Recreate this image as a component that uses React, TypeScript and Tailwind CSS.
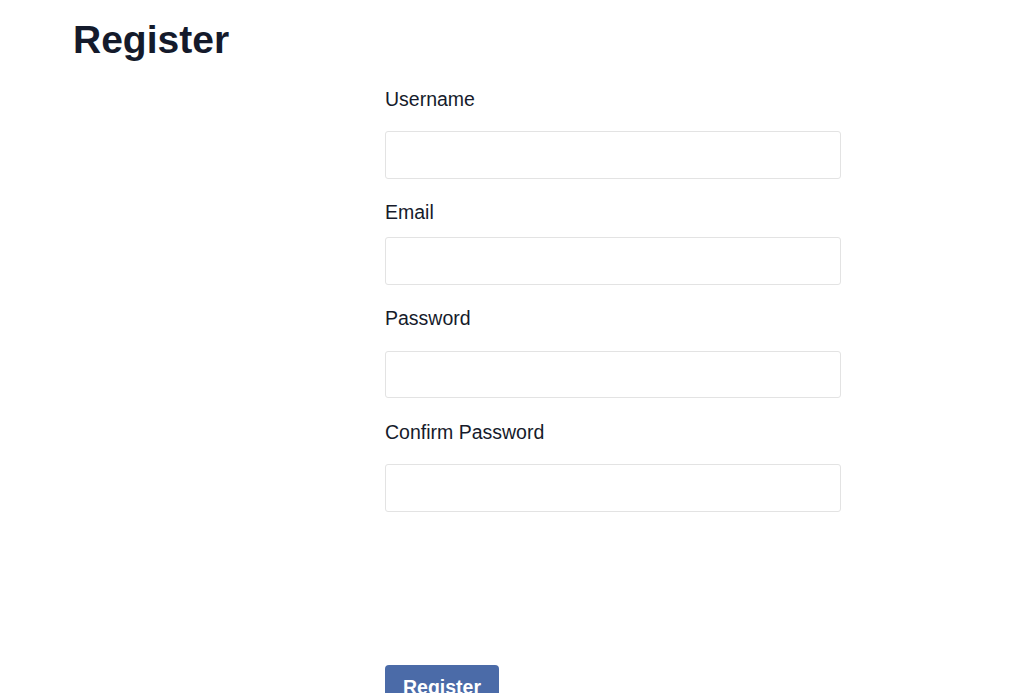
import React, { useState } from 'react';

interface FieldProps {
  label: string;
  type: string;
  value: string;
  onChange: (v: string) => void;
  wrapClass: string;
  labelClass: string;
  inputClass: string;
}

const Field: React.FC<FieldProps> = ({ label, type, value, onChange, wrapClass, labelClass, inputClass }) => (
  <div className={wrapClass}>
    <label className={`block text-[19.5px] leading-[28px] text-[#161b2b] ${labelClass}`}>{label}</label>
    <input
      type={type}
      value={value}
      onChange={(e) => onChange(e.target.value)}
      className={`block w-full rounded-[3px] border border-[#e3e3e3] bg-white px-3 text-[18px] outline-none ${inputClass}`}
    />
  </div>
);

const App: React.FC = () => {
  const [username, setUsername] = useState('');
  const [email, setEmail] = useState('');
  const [password, setPassword] = useState('');
  const [confirm, setConfirm] = useState('');

  return (
    <div className="min-h-screen bg-white font-['Liberation_Sans',Arial,sans-serif]">
      <h1 className="pl-[73px] pt-[18px] text-[39px] font-bold leading-[44px] text-[#141a2b]">Register</h1>

      <form className="ml-[385px] mt-[23px] w-[456px]" onSubmit={(e) => e.preventDefault()}>
        <Field
          label="Username"
          type="text"
          value={username}
          onChange={setUsername}
          wrapClass=""
          labelClass="mb-[18px]"
          inputClass="h-[48px]"
        />
        <Field
          label="Email"
          type="email"
          value={email}
          onChange={setEmail}
          wrapClass="mt-[19px]"
          labelClass="mb-[11px]"
          inputClass="h-[48px]"
        />
        <Field
          label="Password"
          type="password"
          value={password}
          onChange={setPassword}
          wrapClass="mt-[19px]"
          labelClass="mb-[19px]"
          inputClass="h-[47px]"
        />
        <Field
          label="Confirm Password"
          type="password"
          value={confirm}
          onChange={setConfirm}
          wrapClass="mt-[20px]"
          labelClass="mb-[18px]"
          inputClass="h-[48px]"
        />

        <button
          type="submit"
          className="mt-[153px] rounded-[4px] bg-[#4b6ba8] px-[18px] py-[8px] text-[19.5px] font-bold leading-[28px] text-white"
        >
          Register
        </button>
      </form>
    </div>
  );
};

export default App;
